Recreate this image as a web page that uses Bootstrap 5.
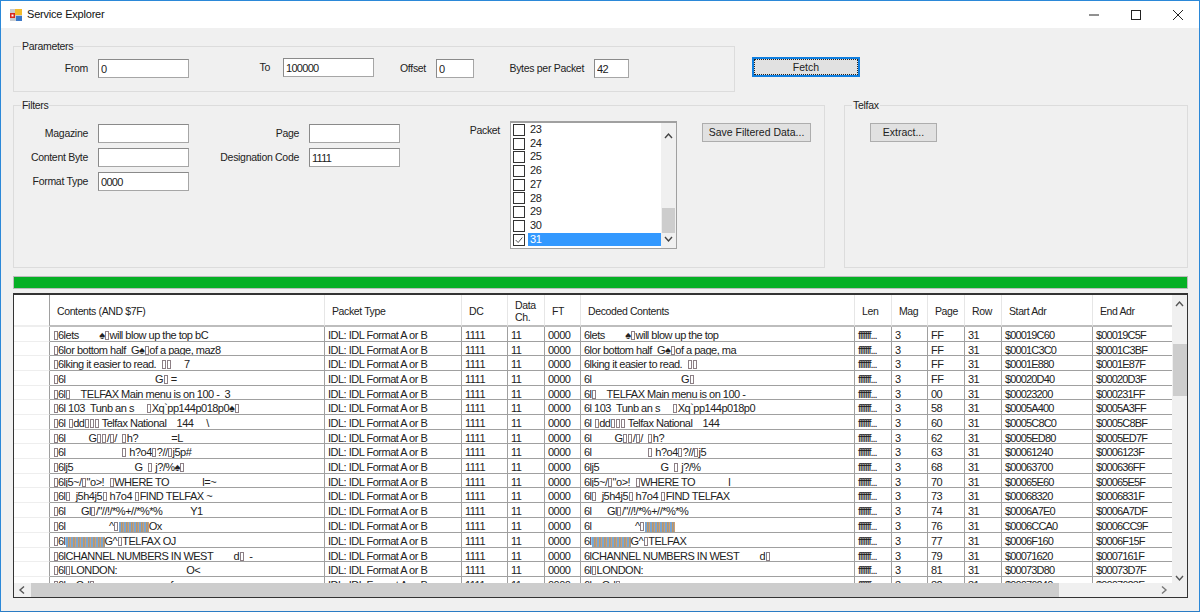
<!DOCTYPE html>
<html lang="en"><head><meta charset="utf-8"><title>Service Explorer</title>
<link rel="stylesheet" href="https://cdn.jsdelivr.net/npm/bootstrap@5.3.0/dist/css/bootstrap.min.css">
<style>
html,body{margin:0;height:612px;overflow:hidden;background:#f0f0f0}
body{font:10.5px/1.2 "Liberation Sans",Arial,sans-serif;letter-spacing:-.3px;color:#222}
.win{width:1200px;height:612px;border:1px solid #2b88d8;border-bottom-color:#2b7cc4;background:#f0f0f0;overflow:hidden}
.ttl{height:27px;background:#fff;padding-left:8px;font-size:11px;letter-spacing:-.2px;color:#111;flex:none}
.ttl svg.ic{margin-right:4px}
.wb{width:42px;height:27px}
.gb{border:1px solid #dcdcdc;border-radius:0;margin:0;padding:0;position:relative}
.gb legend{float:none;width:auto;font-size:10.5px;line-height:14px;margin:0 0 0 7px;padding:0 1px;color:#222}
.par{margin:11px 0 0 12px;width:722px;height:53px}
.fil{margin:6px 0 0 12px;width:812px;height:170px}
.tfx{margin:6px 0 0 19px;width:344px;height:170px}
.inp{display:block;height:19px;border:1px solid #a6a6a6;border-top-color:#8a8a8a;border-left-color:#8a8a8a;border-radius:0;background:#fff;padding:0 2px;font:inherit;letter-spacing:-.7px;font-size:11px;color:#222;box-shadow:none;outline:0;flex:none}
.w91{width:91px}.w38{width:38px}.w35{width:35px}
.lb{flex:none;text-align:right;padding-right:10px;white-space:nowrap}
.win-btn{border:1px solid #adadad;border-radius:0;background:#e1e1e1;padding:0;font:inherit;height:19px;color:#222}
.fetch{width:108px;height:20px;margin:29px 0 0 17px;border:2px solid #0f7fe0;outline:1px dotted #222;outline-offset:-3px}
.c1{width:84px}
.l94{width:94px;padding-right:13px}.l62{width:62px}.l120{width:120px}.l110{width:110px}
.rowp{padding-top:6px}.topf{padding-top:12px}
.up1{margin-top:-2px}
.ctl-col{row-gap:5px}
.packlist{width:167px;height:128px;border:1px solid #a0a0a0;border-top-width:2px;background:#fff;flex:none;margin-top:-3px}
.pk{height:13.72px;padding-left:2px;font-size:11px;letter-spacing:-.3px;line-height:13.7px}
.ck{width:12px;height:12px;border:1px solid #333;background:#fff;flex:none;margin-right:3px;display:block}
.sel{background:#3399ff;color:#fff;flex:1;padding-left:2px;height:13.7px}
.pk-tx{padding-left:2px}
.sb{background:#f0f0f0;flex:none}
.sbv{width:15px}
.thumb{background:#cdcdcd}
.bar{height:13px;background:#e6e6e6;border:1px solid #bcbcbc;margin:8px 0 0 12px;width:1175px}
.bar>div{height:100%;background:#06b025}
.grid{margin:4px 0 0 12px;width:1175px;height:305px;border:1px solid #333;border-top-width:2px;background:#f0f0f0}
.gmain{height:288px}
.tbw{width:1158px;overflow:hidden;background:#fff;height:288px}
table.dg{table-layout:fixed;border-collapse:separate;border-spacing:0;width:1158px;background:#fff;white-space:pre}
.dg th{height:32px;font-weight:400;vertical-align:middle;padding:3px 0 0 7px;border-right:1px solid #e6e6e6;border-bottom:2px solid #bdbdbd;line-height:11.5px;overflow:hidden;white-space:pre-wrap;letter-spacing:-.38px}
.dg td{height:14.67px;padding:3px 0 0 3px;border-right:1px solid #a0a0a0;border-bottom:1px solid #a0a0a0;overflow:hidden;line-height:10.6px;vertical-align:top;font-size:11px;letter-spacing:-.5px}
.dg td:first-child,.dg th:first-child{border-right:1px solid #a0a0a0;border-bottom-color:#eee;padding:0}
.dg td:last-child,.dg th:last-child{border-right:0}
.dg td.ln{letter-spacing:-1.1px}
.dg td.ad{letter-spacing:-.85px}
.dg i{display:inline-block;width:4px;height:9px;border:1px solid #8c7f85;vertical-align:-1px;margin:0 .5px}
.dg i.st{height:10px;border:0;margin:0;vertical-align:-2px;background:repeating-linear-gradient(90deg,#7aa6d2 0 2px,#c8985f 2px 3px,#8f9aa6 3px 4px,#d0a070 4px 5px)}
.dg i.w30{width:30px}.dg i.w39{width:39px}
.sbh{height:14px}
.arr{flex:none}
.list-thumb{width:13px;height:25px;margin:67px 1px 1px}
.gv-thumb{width:14px;height:52px;margin-top:35px}
.gh-thumb{width:1028px;height:14px}
.gh-r{margin-right:16px}
.save{width:109px;margin-left:25px;margin-top:-1px}
.ext{width:67px;margin-left:25px;margin-top:-1px}
</style></head><body>
<div class="win d-flex flex-column">
 <div class="ttl d-flex align-items-center">
  <svg class="ic" width="14" height="14" viewBox="0 0 14 14"><rect x="1" y="1" width="12" height="12" fill="#c9ccd0"/><rect x="6" y="1" width="7" height="6" fill="#f2bb2c"/><rect x="1" y="5" width="5" height="5" fill="#d8261c"/><rect x="2.500" y="6.500" width="2" height="2" fill="#fff"/><rect x="7" y="8" width="6" height="5" fill="#3b78c8"/></svg>
  <span>Service Explorer</span>
  <div class="ms-auto d-flex">
   <div class="wb d-flex align-items-center justify-content-center"><svg width="12" height="12" viewBox="0 0 12 12"><path d="M1 6h10" stroke="#222" fill="none"/></svg></div>
   <div class="wb d-flex align-items-center justify-content-center"><svg width="12" height="12" viewBox="0 0 12 12"><rect x="1.500" y="1.500" width="9" height="9" stroke="#222" fill="none"/></svg></div>
   <div class="wb d-flex align-items-center justify-content-center"><svg width="12" height="12" viewBox="0 0 12 12"><path d="M1 1l10 10M11 1L1 11" stroke="#222" fill="none"/></svg></div>
  </div>
 </div>
 <div class="d-flex align-items-start">
  <fieldset class="gb par"><legend>Parameters</legend>
   <div class="d-flex align-items-center rowp">
    <span class="lb c1">From</span><input class="inp w91" value="0">
    <span class="lb l94 up1">To</span><input class="inp w91 up1" value="100000">
    <span class="lb l62">Offset</span><input class="inp w38" value="0">
    <span class="lb l120">Bytes per Packet</span><input class="inp w35" value="42">
   </div>
  </fieldset>
  <button class="win-btn fetch">Fetch</button>
 </div>
 <div class="d-flex">
  <fieldset class="gb fil"><legend>Filters</legend>
   <div class="d-flex align-items-start topf">
    <div class="d-flex flex-column ctl-col">
     <div class="d-flex align-items-center"><span class="lb c1">Magazine</span><input class="inp w91"></div>
     <div class="d-flex align-items-center"><span class="lb c1">Content Byte</span><input class="inp w91"></div>
     <div class="d-flex align-items-center"><span class="lb c1">Format Type</span><input class="inp w91" value="0000"></div>
    </div>
    <div class="d-flex flex-column ctl-col">
     <div class="d-flex align-items-center"><span class="lb l120">Page</span><input class="inp w91"></div>
     <div class="d-flex align-items-center"><span class="lb l120">Designation Code</span><input class="inp w91" value="1111"></div>
    </div>
    <span class="lb l110">Packet</span>
    <div class="packlist d-flex">
     <div class="flex-grow-1">
      <div class="pk d-flex align-items-center"><span class="ck"></span><span class="pk-tx">23</span></div>
      <div class="pk d-flex align-items-center"><span class="ck"></span><span class="pk-tx">24</span></div>
      <div class="pk d-flex align-items-center"><span class="ck"></span><span class="pk-tx">25</span></div>
      <div class="pk d-flex align-items-center"><span class="ck"></span><span class="pk-tx">26</span></div>
      <div class="pk d-flex align-items-center"><span class="ck"></span><span class="pk-tx">27</span></div>
      <div class="pk d-flex align-items-center"><span class="ck"></span><span class="pk-tx">28</span></div>
      <div class="pk d-flex align-items-center"><span class="ck"></span><span class="pk-tx">29</span></div>
      <div class="pk d-flex align-items-center"><span class="ck"></span><span class="pk-tx">30</span></div>
      <div class="pk d-flex align-items-center"><svg class="ck" viewBox="0 0 12 12"><path d="M2 6l3 3 5-6" stroke="#333" fill="none"/></svg><span class="sel">31</span></div>
     </div>
     <div class="sb sbv d-flex flex-column">
      <svg class="arr mt-2" width="15" height="10" viewBox="0 0 15 10"><path d="M4 7l3.500-4 3.500 4" stroke="#444" stroke-width="1.4" fill="none"/></svg>
      <div class="thumb list-thumb"></div>
      <svg class="arr" width="15" height="10" viewBox="0 0 15 10"><path d="M4 3l3.500 4 3.500-4" stroke="#444" stroke-width="1.4" fill="none"/></svg>
     </div>
    </div>
    <button class="win-btn save">Save Filtered Data...</button>
   </div>
  </fieldset>
  <fieldset class="gb tfx"><legend>Telfax</legend><div class="topf"><button class="win-btn ext">Extract...</button></div></fieldset>
 </div>
 <div class="bar"><div></div></div>
 <div class="grid">
  <div class="gmain d-flex">
   <div class="tbw">
   <table class="dg">
    <colgroup><col style="width:36px"><col style="width:275px"><col style="width:137px"><col style="width:46px"><col style="width:37px"><col style="width:36px"><col style="width:274px"><col style="width:37px"><col style="width:36px"><col style="width:37px"><col style="width:37px"><col style="width:91px"><col style="width:79px"></colgroup>
    <thead><tr><th></th><th>Contents (AND $7F)</th><th>Packet Type</th><th>DC</th><th>Data
Ch.</th><th>FT</th><th>Decoded Contents</th><th>Len</th><th>Mag</th><th>Page</th><th>Row</th><th>Start Adr</th><th>End Adr</th></tr></thead>
    <tbody>
<tr><td></td><td><i></i>6lets        ♠<i></i>will blow up the top bC</td><td>IDL: IDL Format A or B</td><td>1111</td><td>11</td><td>0000</td><td>6lets        ♠<i></i>will blow up the top</td><td class="ln">fffffff...</td><td>3</td><td>FF</td><td>31</td><td class="ad">$00019C60</td><td class="ad">$00019C5F</td></tr>
<tr><td></td><td><i></i>6lor bottom half  G♠<i></i>of a page, maz8</td><td>IDL: IDL Format A or B</td><td>1111</td><td>11</td><td>0000</td><td>6lor bottom half  G♠<i></i>of a page, ma</td><td class="ln">fffffff...</td><td>3</td><td>FF</td><td>31</td><td class="ad">$0001C3C0</td><td class="ad">$0001C3BF</td></tr>
<tr><td></td><td><i></i>6lking it easier to read.  <i></i><i></i>     7</td><td>IDL: IDL Format A or B</td><td>1111</td><td>11</td><td>0000</td><td>6lking it easier to read.  <i></i><i></i></td><td class="ln">fffffff...</td><td>3</td><td>FF</td><td>31</td><td class="ad">$0001E880</td><td class="ad">$0001E87F</td></tr>
<tr><td></td><td><i></i>6l                                   G<i></i> =</td><td>IDL: IDL Format A or B</td><td>1111</td><td>11</td><td>0000</td><td>6l                                   G<i></i></td><td class="ln">fffffff...</td><td>3</td><td>FF</td><td>31</td><td class="ad">$00020D40</td><td class="ad">$00020D3F</td></tr>
<tr><td></td><td><i></i>6l<i></i>    TELFAX Main menu is on 100 -  3</td><td>IDL: IDL Format A or B</td><td>1111</td><td>11</td><td>0000</td><td>6l<i></i>    TELFAX Main menu is on 100 -</td><td class="ln">fffffff...</td><td>3</td><td>00</td><td>31</td><td class="ad">$00023200</td><td class="ad">$000231FF</td></tr>
<tr><td></td><td><i></i>6l 103  Tunb an s     <i></i>Xq`pp144p018p0♠<i></i></td><td>IDL: IDL Format A or B</td><td>1111</td><td>11</td><td>0000</td><td>6l 103  Tunb an s     <i></i>Xq`pp144p018p0</td><td class="ln">fffffff...</td><td>3</td><td>58</td><td>31</td><td class="ad">$0005A400</td><td class="ad">$0005A3FF</td></tr>
<tr><td></td><td><i></i>6l <i></i>dd<i></i><i></i><i></i> Telfax National    144     \</td><td>IDL: IDL Format A or B</td><td>1111</td><td>11</td><td>0000</td><td>6l <i></i>dd<i></i><i></i><i></i> Telfax National    144</td><td class="ln">fffffff...</td><td>3</td><td>60</td><td>31</td><td class="ad">$0005C8C0</td><td class="ad">$0005C8BF</td></tr>
<tr><td></td><td><i></i>6l         G<i></i><i></i>/<i></i>/  <i></i>h?             =L</td><td>IDL: IDL Format A or B</td><td>1111</td><td>11</td><td>0000</td><td>6l         G<i></i><i></i>/<i></i>/  <i></i>h?</td><td class="ln">fffffff...</td><td>3</td><td>62</td><td>31</td><td class="ad">$0005ED80</td><td class="ad">$0005ED7F</td></tr>
<tr><td></td><td><i></i>6l                      <i></i> h?o4<i></i>?//<i></i>j5p#</td><td>IDL: IDL Format A or B</td><td>1111</td><td>11</td><td>0000</td><td>6l                      <i></i> h?o4<i></i>?//<i></i>j5</td><td class="ln">fffffff...</td><td>3</td><td>63</td><td>31</td><td class="ad">$00061240</td><td class="ad">$0006123F</td></tr>
<tr><td></td><td><i></i>6lj5                        G  <i></i> j?/%♠<i></i></td><td>IDL: IDL Format A or B</td><td>1111</td><td>11</td><td>0000</td><td>6lj5                        G  <i></i> j?/%</td><td class="ln">fffffff...</td><td>3</td><td>68</td><td>31</td><td class="ad">$00063700</td><td class="ad">$000636FF</td></tr>
<tr><td></td><td><i></i>6lj5~/<i></i>"o>!  <i></i>WHERE TO             l=~</td><td>IDL: IDL Format A or B</td><td>1111</td><td>11</td><td>0000</td><td>6lj5~/<i></i>"o>!  <i></i>WHERE TO             l</td><td class="ln">fffffff...</td><td>3</td><td>70</td><td>31</td><td class="ad">$00065E60</td><td class="ad">$00065E5F</td></tr>
<tr><td></td><td><i></i>6l<i></i>  j5h4j5<i></i> h7o4 <i></i>FIND TELFAX ~</td><td>IDL: IDL Format A or B</td><td>1111</td><td>11</td><td>0000</td><td>6l<i></i>  j5h4j5<i></i> h7o4 <i></i>FIND TELFAX</td><td class="ln">fffffff...</td><td>3</td><td>73</td><td>31</td><td class="ad">$00068320</td><td class="ad">$0006831F</td></tr>
<tr><td></td><td><i></i>6l      Gl<i></i>/"//!/*%+//*%*%           Y1</td><td>IDL: IDL Format A or B</td><td>1111</td><td>11</td><td>0000</td><td>6l      Gl<i></i>/"//!/*%+//*%*%</td><td class="ln">fffffff...</td><td>3</td><td>74</td><td>31</td><td class="ad">$0006A7E0</td><td class="ad">$0006A7DF</td></tr>
<tr><td></td><td><i></i>6l                 ^<i></i><i class="st w30"></i>Ox</td><td>IDL: IDL Format A or B</td><td>1111</td><td>11</td><td>0000</td><td>6l                 ^<i></i><i class="st w30"></i></td><td class="ln">fffffff...</td><td>3</td><td>76</td><td>31</td><td class="ad">$0006CCA0</td><td class="ad">$0006CC9F</td></tr>
<tr><td></td><td><i></i>6l<i class="st w39"></i>G^<i></i>TELFAX OJ</td><td>IDL: IDL Format A or B</td><td>1111</td><td>11</td><td>0000</td><td>6l<i class="st w39"></i>G^<i></i>TELFAX</td><td class="ln">fffffff...</td><td>3</td><td>77</td><td>31</td><td class="ad">$0006F160</td><td class="ad">$0006F15F</td></tr>
<tr><td></td><td><i></i>6lCHANNEL NUMBERS IN WEST        d<i></i>  -</td><td>IDL: IDL Format A or B</td><td>1111</td><td>11</td><td>0000</td><td>6lCHANNEL NUMBERS IN WEST        d<i></i></td><td class="ln">fffffff...</td><td>3</td><td>79</td><td>31</td><td class="ad">$00071620</td><td class="ad">$0007161F</td></tr>
<tr><td></td><td><i></i>6l<i></i>LONDON:                           O&lt;</td><td>IDL: IDL Format A or B</td><td>1111</td><td>11</td><td>0000</td><td>6l<i></i>LONDON:</td><td class="ln">fffffff...</td><td>3</td><td>81</td><td>31</td><td class="ad">$00073D80</td><td class="ad">$00073D7F</td></tr>
<tr><td></td><td><i></i>6l    Gd<i></i>                             ƒ</td><td>IDL: IDL Format A or B</td><td>1111</td><td>11</td><td>0000</td><td>6l    Gd<i></i></td><td class="ln">fffffff...</td><td>3</td><td>82</td><td>31</td><td class="ad">$00076240</td><td class="ad">$0007623F</td></tr>
    </tbody>
   </table>
   </div>
   <div class="sb sbv d-flex flex-column align-items-center">
    <svg class="arr mt-1" width="15" height="10" viewBox="0 0 15 10"><path d="M4 7l3.500-4 3.500 4" stroke="#555" stroke-width="1.4" fill="none"/></svg>
    <div class="thumb gv-thumb"></div>
    <svg class="arr mt-auto" width="15" height="10" viewBox="0 0 15 10"><path d="M4 3l3.500 4 3.500-4" stroke="#555" stroke-width="1.4" fill="none"/></svg>
   </div>
  </div>
  <div class="sb sbh d-flex align-items-center">
   <svg class="arr" width="17" height="14" viewBox="0 0 17 14"><path d="M10 3.500l-4 3.500 4 3.500" stroke="#555" stroke-width="1.4" fill="none"/></svg>
   <div class="thumb gh-thumb"></div>
   <svg class="arr ms-auto gh-r" width="15" height="14" viewBox="0 0 15 14"><path d="M6 3.500l4 3.500-4 3.500" stroke="#777" stroke-width="1.4" fill="none"/></svg>
  </div>
 </div>
</div>
<script src="https://cdn.jsdelivr.net/npm/bootstrap@5.3.0/dist/js/bootstrap.bundle.min.js"></script>
</body></html>
